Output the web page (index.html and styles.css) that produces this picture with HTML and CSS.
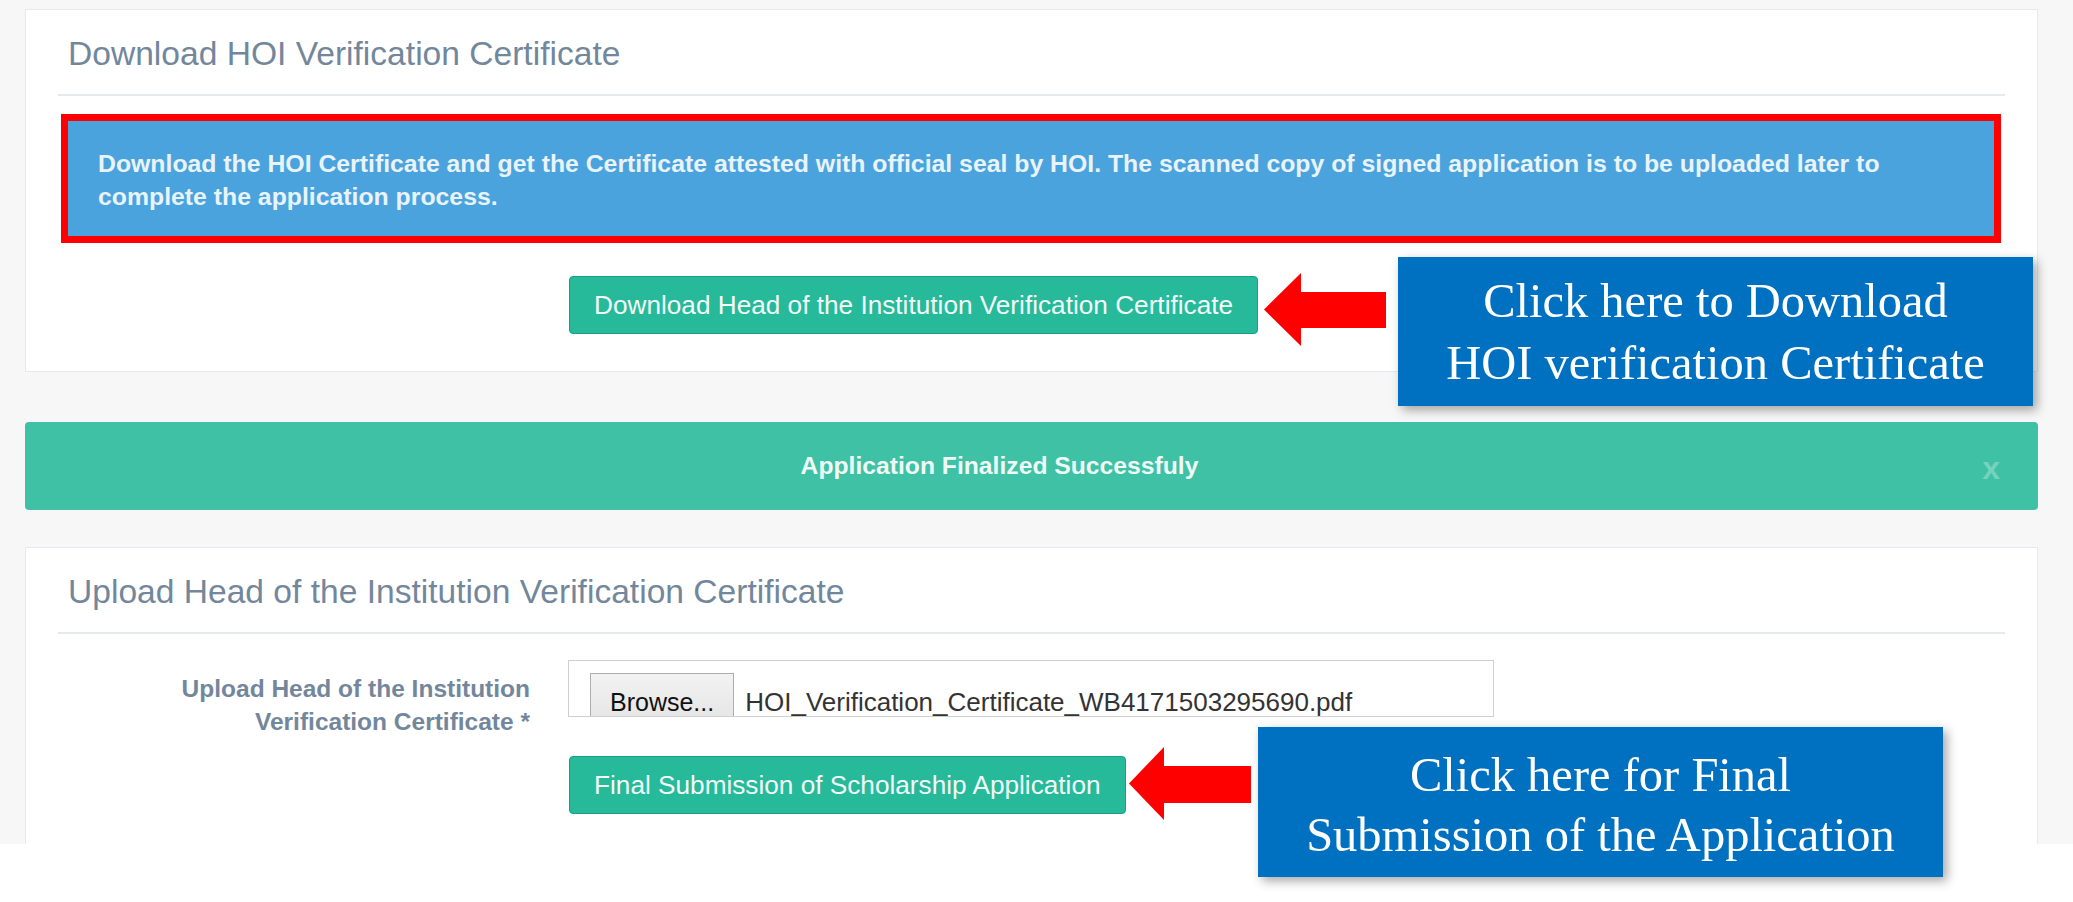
FILE: index.html
```html
<!DOCTYPE html>
<html lang="en">
<head>
    <meta charset="UTF-8">
    <meta name="viewport" content="width=device-width, initial-scale=1.0">
    <title>HOI Verification Certificate</title>
    <link rel="stylesheet" href="styles.css">
</head>
<body>
<div class="page">
    <div class="screen">
        <div class="panel">
            <h2 class="panel-title">Download HOI Verification Certificate</h2>
            <div class="notice-frame">
                <div class="notice">Download the HOI Certificate and get the Certificate attested with official seal by HOI. The scanned copy of signed application is to be uploaded later to complete the application process.</div>
            </div>
            <div class="btn-row">
                <button class="btn">Download Head of the Institution Verification Certificate</button>
            </div>
        </div>

        <div class="alert-success">
            Application Finalized Successfuly
            <span class="close">x</span>
        </div>

        <div class="panel">
            <h2 class="panel-title">Upload Head of the Institution Verification Certificate</h2>
            <div class="form-row">
                <label class="form-label">Upload Head of the Institution Verification Certificate *</label>
                <div class="file-box">
                    <span class="browse">Browse...</span>
                    <span class="file-name">HOI_Verification_Certificate_WB4171503295690.pdf</span>
                </div>
            </div>
            <div class="btn-row submit-row">
                <button class="btn">Final Submission of Scholarship Application</button>
            </div>
        </div>
    </div>

    <!-- annotations drawn over the screenshot -->
    <svg class="arrow arrow-one" viewBox="0 0 122 73" width="122" height="73">
        <polygon points="0,36.5 37,0 37,19 122,19 122,55 37,55 37,73" fill="#ff0000"/>
    </svg>
    <div class="callout callout-one">Click here to Download<br>HOI verification Certificate</div>

    <svg class="arrow arrow-two" viewBox="0 0 122 73" width="122" height="73">
        <polygon points="0,36.5 35,0 35,19 122,19 122,56 35,56 35,73" fill="#ff0000"/>
    </svg>
    <div class="callout callout-two">Click here for Final<br>Submission of the Application</div>
</div>
</body>
</html>
```

FILE: styles.css
```css
body {
    margin: 0;
    background: #fff;
    font-family: "Liberation Sans", Arial, sans-serif;
}
.page {
    position: relative;
    height: 902px;
    overflow: hidden;
}
.screen {
    box-sizing: border-box;
    height: 844px;
    padding: 9px 35px 0 25px;
    background: #f7f7f7;
    overflow: hidden;
}
.panel {
    background: #fff;
    border: 1px solid #e6e9ed;
    padding: 24px 32px 37px;
}
.panel-title {
    margin: 0;
    padding: 0 10px 20px;
    font-size: 33.6px;
    font-weight: normal;
    line-height: 40px;
    color: #73879c;
    border-bottom: 2px solid #e6e9ed;
}
.notice-frame {
    margin: 18px 4px 0 3px;
    border: 7px solid #ff0000;
}
.notice {
    padding: 26px 60px 23px 30px;
    background: #4ba3de;
    color: #e9f3fa;
    font-size: 24.8px;
    font-weight: bold;
    line-height: 33px;
}
.btn-row {
    margin-top: 33px;
    padding-left: 511px;
}
.btn {
    padding: 13px 24px;
    font-family: "Liberation Sans", Arial, sans-serif;
    font-size: 26.2px;
    line-height: 30px;
    color: #f2fbf8;
    background: #26b99a;
    border: 1px solid #169f85;
    border-radius: 4px;
    cursor: pointer;
}
.alert-success {
    position: relative;
    display: flex;
    align-items: center;
    justify-content: center;
    height: 88px;
    margin: 50px 0 37px;
    padding: 0 79px 0 15px;
    background: #3ec1a4;
    border-radius: 4px;
    color: #effaf7;
    font-size: 24.7px;
    font-weight: bold;
}
.close {
    position: absolute;
    right: 38px;
    top: 30px;
    font-size: 32px;
    line-height: 32px;
    color: rgba(255, 255, 255, 0.3);
}
.form-row {
    display: flex;
    align-items: flex-start;
    height: 57px;
    margin-top: 26px;
}
.form-label {
    width: 472px;
    margin: 12px 38px 0 0;
    text-align: right;
    font-size: 24.5px;
    font-weight: bold;
    line-height: 33px;
    color: #73879c;
}
.file-box {
    display: flex;
    align-items: baseline;
    width: 924px;
    height: 55px;
    border: 1px solid #cfcfcf;
    overflow: hidden;
}
.browse {
    margin: 12px 0 0 21px;
    padding: 14px 19px 20px;
    font-size: 25px;
    line-height: 28px;
    color: #111;
    background: linear-gradient(#f2f2f2, #e1e1e1);
    border: 1px solid #adadad;
}
.file-name {
    margin-left: 11px;
    font-size: 26px;
    line-height: 28px;
    color: #333;
}
.submit-row {
    margin-top: 39px;
}
.arrow {
    position: absolute;
}
.arrow-one {
    left: 1264px;
    top: 273px;
}
.arrow-two {
    left: 1129px;
    top: 747px;
}
.callout {
    position: absolute;
    box-sizing: border-box;
    display: flex;
    flex-direction: column;
    justify-content: center;
    text-align: center;
    background: #0070c0;
    color: #fff;
    font-family: "Liberation Serif", "Times New Roman", serif;
    font-size: 48.5px;
    box-shadow: 4px 4px 10px rgba(0, 0, 0, 0.35);
}
.callout-one {
    left: 1398px;
    top: 257px;
    width: 635px;
    height: 149px;
    line-height: 62px;
}
.callout-two {
    left: 1258px;
    top: 727px;
    width: 685px;
    height: 150px;
    padding-top: 6px;
    line-height: 60px;
}
```
